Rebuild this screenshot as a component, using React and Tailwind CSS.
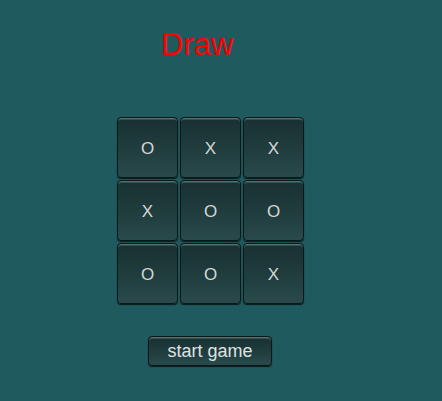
import React from "react";

const board = ["O", "X", "X", "X", "O", "O", "O", "O", "X"];

const Cell = ({ value }) => (
  <button className="w-[61px] h-[61px] rounded-[4px] border border-[#0a1819] bg-gradient-to-b from-[#183031] via-[#203c3d] to-[#294a4b] shadow-[inset_0_1px_0_#56706f,inset_0_2px_0_#34504f,0_1px_1px_#0a1a1b] flex items-center justify-center pt-[2px] text-[17px] text-[#d4d8d8]">
    {value}
  </button>
);

const App = () => {
  return (
    <div className="w-[442px] h-[401px] bg-[#1f5b5e] flex flex-col font-['Liberation_Sans',Arial,sans-serif]">
      <div className="ml-[161px] mt-[29px] text-[31px] leading-none text-[#ff0000]">Draw</div>

      <div className="ml-[117px] mt-[57px] grid grid-cols-[61px_61px_61px] gap-[2px] w-max">
        {board.map((v, i) => (
          <Cell key={i} value={v} />
        ))}
      </div>

      <button className="ml-[148px] mt-[32px] w-[124px] h-[30px] rounded-[4px] border border-[#0a1819] bg-gradient-to-b from-[#183031] via-[#203c3d] to-[#294a4b] shadow-[inset_0_1px_0_#56706f,inset_0_2px_0_#34504f,0_1px_1px_#0a1a1b] flex items-center justify-center text-[18px] leading-none text-[#dfe3e3]">
        start game
      </button>
    </div>
  );
};

export default App;
